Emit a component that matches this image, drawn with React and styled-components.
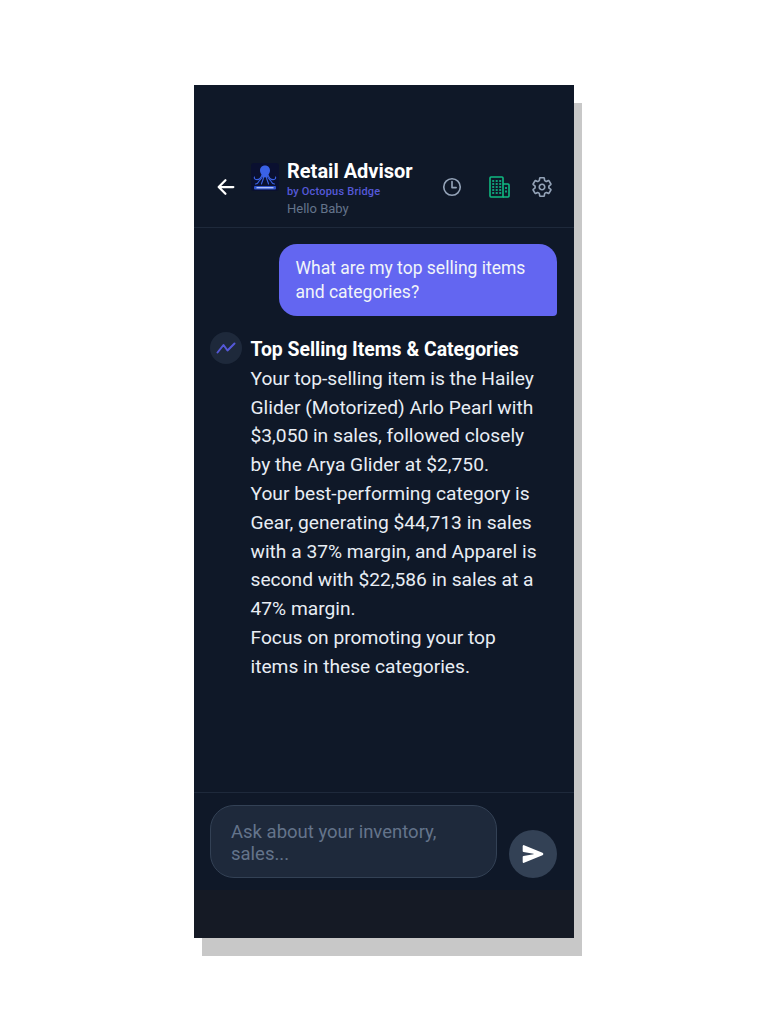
import React from 'react';
import styled, { createGlobalStyle } from 'styled-components';
import { IoArrowBack, IoSend, IoSettingsOutline, IoTimeOutline } from 'react-icons/io5';

const GlobalStyle = createGlobalStyle`
  html, body {
    margin: 0;
    padding: 0;
    background: #ffffff;
  }
  * {
    box-sizing: border-box;
  }
`;

/* ================= DRAWINGS ================= */

const OctopusLogo = () => (
  <svg width="28" height="28" viewBox="0 0 28 28">
    <rect width="28" height="28" rx="3" fill="#0a1030" />
    <g fill="none" stroke="#3a62e6" strokeLinecap="round" strokeWidth="1.1">
      <path d="M11 12c-1 3-3 5-6 4.500-1.500-.3-2-1.500-1.500-2.500" />
      <path d="M11.500 13c-.5 3-3 4-4 6-.6 1.300-1.500 2-3 2" />
      <path d="M12.500 14c0 3-1.500 4.500-2 7" />
      <path d="M15.500 14c0 3 1.500 4.500 2 7" />
      <path d="M16.500 13c.5 3 3 4 4 6 .6 1.300 1.500 2 3 2" />
      <path d="M17 12c1 3 3 5 6 4.500 1.500-.3 2-1.500 1.500-2.500" />
    </g>
    <path
      d="M14 2.500c3.200 0 5 2.300 5 5 0 2-1 3.200-1.800 4.500-.7 1.200-1 2.500-3.200 2.500s-2.500-1.300-3.200-2.500C10 10.700 9 9.500 9 7.500c0-2.700 1.800-5 5-5z"
      fill="#3a62e6"
    />
    <rect x="3" y="23" width="22" height="3.500" rx="1" fill="#2f52cc" />
    <rect x="5.500" y="24.200" width="17" height="1.100" fill="#cfd9ff" />
  </svg>
);

const TrendMark = () => (
  <svg width="20" height="12" viewBox="0 0 20 12" fill="none">
    <path
      d="M1.500 10.500 L7.500 3 L11.500 8.500 L18.500 1.500"
      stroke="#5558d8"
      strokeWidth="2"
      strokeLinecap="round"
      strokeLinejoin="round"
    />
  </svg>
);

const WINDOW_ROWS = [4, 7, 10, 13, 16];
const WINDOW_COLS = [3.2, 6.7, 10.2];

const BuildingMark = () => (
  <svg width="21" height="22" viewBox="0 0 21 22" fill="none">
    <path
      d="M2 1h11a1 1 0 0 1 1 1v19H2a1 1 0 0 1-1-1V2a1 1 0 0 1 1-1z"
      stroke="#10b981"
      strokeWidth="1.600"
    />
    <path
      d="M14 8h5a1 1 0 0 1 1 1v11a1 1 0 0 1-1 1h-5"
      stroke="#10b981"
      strokeWidth="1.600"
    />
    {WINDOW_ROWS.map((y) =>
      WINDOW_COLS.map((x) => (
        <rect key={`${x}-${y}`} x={x} y={y} width="2" height="2" fill="#0f9d78" />
      ))
    )}
    <rect x="16" y="11" width="2" height="2" fill="#0f9d78" />
    <rect x="16" y="14.500" width="2" height="2" fill="#0f9d78" />
  </svg>
);

/* ================= COMPONENT ================= */

export default function App() {
  return (
    <Page>
      <GlobalStyle />
      <Phone>
        <Screen>
          <Header>
            <BackButton>
              <IoArrowBack size={24} />
            </BackButton>
            <Logo>
              <OctopusLogo />
            </Logo>
            <Titles>
              <Title>Retail Advisor</Title>
              <Byline>by Octopus Bridge</Byline>
              <Greeting>Hello Baby</Greeting>
            </Titles>
            <HeaderIcons>
              <IconButton color="#94a3b8">
                <IoTimeOutline size={22} />
              </IconButton>
              <IconButton color="#10b981" gap={26}>
                <BuildingMark />
              </IconButton>
              <IconButton color="#94a3b8" gap={21}>
                <IoSettingsOutline size={22} />
              </IconButton>
            </HeaderIcons>
          </Header>

          <Messages>
            <UserBubble>What are my top selling items and categories?</UserBubble>
            <Answer>
              <AnswerIcon>
                <TrendMark />
              </AnswerIcon>
              <AnswerBody>
                <AnswerTitle>Top Selling Items &amp; Categories</AnswerTitle>
                <AnswerText>
                  Your top-selling item is the Hailey Glider (Motorized) Arlo Pearl with
                  $3,050 in sales, followed closely by the Arya Glider at $2,750.
                </AnswerText>
                <AnswerText>
                  Your best-performing category is Gear, generating $44,713 in sales with a
                  37% margin, and Apparel is second with $22,586 in sales at a 47% margin.
                </AnswerText>
                <AnswerText>
                  Focus on promoting your top items in these categories.
                </AnswerText>
              </AnswerBody>
            </Answer>
          </Messages>

          <Composer>
            <InputBox>Ask about your inventory, sales...</InputBox>
            <SendButton>
              <IoSend size={22} />
            </SendButton>
          </Composer>
        </Screen>
        <BottomStrip />
      </Phone>
    </Page>
  );
}

/* ================= STYLES ================= */

const Page = styled.div`
  min-height: 1024px;
  display: flex;
  justify-content: center;
  padding-top: 85px;
  font-family: Roboto, 'Liberation Sans', sans-serif;
`;

const Phone = styled.div`
  width: 380px;
  height: 853px;
  display: flex;
  flex-direction: column;
  background: #151a25;
  box-shadow: 8px 18px 0 #c8c8c8;
`;

const Screen = styled.div`
  height: 805px;
  display: flex;
  flex-direction: column;
  background: #0f1828;
`;

const Header = styled.header`
  height: 143px;
  padding: 75px 20px 0 20px;
  display: flex;
  align-items: flex-start;
  border-bottom: 1px solid #1e293b;
`;

const BackButton = styled.div`
  width: 24px;
  height: 24px;
  margin-top: 15px;
  color: #ffffff;
  display: flex;
  align-items: center;
  justify-content: center;
`;

const Logo = styled.div`
  width: 28px;
  height: 28px;
  margin: 3px 8px 0 13px;
`;

const Titles = styled.div`
  flex: 1;
  display: flex;
  flex-direction: column;
`;

const Title = styled.div`
  font-size: 20px;
  line-height: 23px;
  font-weight: 700;
  color: #ffffff;
`;

const Byline = styled.div`
  margin-top: 2px;
  font-size: 11px;
  line-height: 14px;
  font-weight: 500;
  letter-spacing: 0.2px;
  color: #5558d8;
`;

const Greeting = styled.div`
  margin-top: 1px;
  font-size: 13px;
  line-height: 18px;
  color: #64748b;
`;

const HeaderIcons = styled.div`
  margin-top: 15px;
  margin-right: 1px;
  display: flex;
  align-items: center;
`;

const IconButton = styled.div`
  height: 24px;
  margin-left: ${({ gap }) => gap || 0}px;
  display: flex;
  align-items: center;
  color: ${({ color }) => color};

  svg[stroke] * {
    stroke-width: 38px;
  }
`;

const Messages = styled.main`
  flex: 1;
  padding: 16px 17px 0 16px;
  display: flex;
  flex-direction: column;
  gap: 16px;
`;

const UserBubble = styled.div`
  align-self: flex-end;
  width: 278px;
  padding: 12px 16px 12px 16.5px;
  font-size: 17.5px;
  line-height: 24px;
  color: #f1f5f9;
  background: #6366f1;
  border-radius: 18px 18px 4px 18px;
`;

const Answer = styled.div`
  display: flex;
  gap: 8.5px;
`;

const AnswerIcon = styled.div`
  width: 32px;
  height: 32px;
  flex-shrink: 0;
  border-radius: 50%;
  background: #1e293b;
  display: flex;
  align-items: center;
  justify-content: center;
`;

const AnswerBody = styled.div`
  flex: 1;
  padding-top: 4px;
  padding-right: 16px;
`;

const AnswerTitle = styled.div`
  font-size: 19.4px;
  line-height: 28.8px;
  font-weight: 700;
  color: #ffffff;
`;

const AnswerText = styled.p`
  margin: 0;
  font-size: 19.2px;
  line-height: 28.8px;
  color: #e8edf4;
`;

const Composer = styled.footer`
  height: 98px;
  padding: 12px 17px 12px 16px;
  display: flex;
  align-items: flex-end;
  justify-content: space-between;
  border-top: 1px solid #1e293b;
`;

const InputBox = styled.div`
  width: 287px;
  height: 73px;
  padding: 15px 20px 0 20px;
  font-size: 18.5px;
  line-height: 22px;
  color: #64748b;
  background: #1e293b;
  border: 1px solid #334155;
  border-radius: 24px;
`;

const SendButton = styled.div`
  width: 48px;
  height: 48px;
  border-radius: 50%;
  background: #334155;
  color: #ffffff;
  display: flex;
  align-items: center;
  justify-content: center;
`;

const BottomStrip = styled.div`
  flex: 1;
`;
